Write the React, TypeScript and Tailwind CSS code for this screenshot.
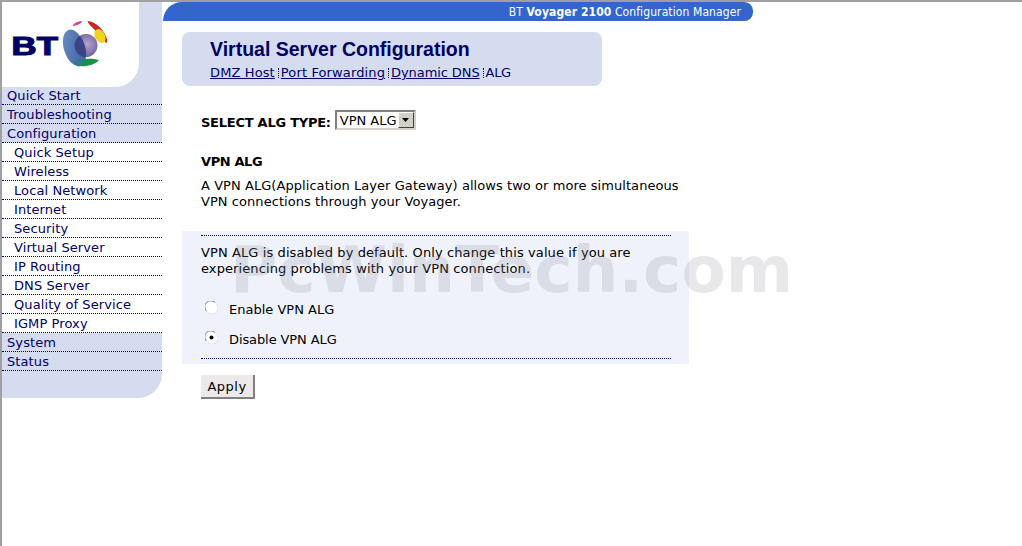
export default function App() {
  const top = ["Quick Start", "Troubleshooting", "Configuration"];
  const sub = ["Quick Setup", "Wireless", "Local Network", "Internet", "Security", "Virtual Server", "IP Routing", "DNS Server", "Quality of Service", "IGMP Proxy"];
  const bottom = ["System", "Status"];
  const rowDots = "border-b border-dotted border-[#000066]";
  return (
    <div className="relative h-[546px] w-[1022px] overflow-hidden bg-white border-t-2 border-l-2 border-[#a0a0a0] font-['DejaVu_Sans',sans-serif] text-[13px] text-black">
      <div className="flex items-start">
        <aside className="w-[160px] shrink-0 rounded-br-[24px] bg-[#d6dcf0] pb-[27px] tracking-[0.1px] text-[#000066]">
          <div className="flex h-[85px] w-[137px] items-start rounded-br-[24px] bg-white">
            <svg width="110" height="60" viewBox="11 19 110 60" className="mt-[17px] ml-[9px]">
              <defs>
                <radialGradient id="pur" cx="0.55" cy="0.45" r="0.6">
                  <stop offset="0" stopColor="#b4a4cc" />
                  <stop offset="1" stopColor="#6c5c9c" />
                </radialGradient>
                <linearGradient id="blu" x1="0" y1="0" x2="1" y2="1">
                  <stop offset="0" stopColor="#6a90c8" />
                  <stop offset="1" stopColor="#3c5a9c" />
                </linearGradient>
                <clipPath id="ov"><circle cx="86" cy="45.500" r="11.500" /></clipPath>
              </defs>
              <text x="11.500" y="55" fontFamily="'Liberation Sans',sans-serif" fontWeight="700" fontSize="25" fill="#000066" stroke="#000066" strokeWidth="1.100" textLength="46.500" lengthAdjust="spacingAndGlyphs">BT</text>
              <path d="M73 25 C75 22.500 79 21 82 21 C82 23 78 25 74 26 C73 26 73 25.500 73 25Z" fill="#e0408c" />
              <path d="M87.500 21 C95 21.500 104 29 107 39 C107.500 41 107 43 106 43 L94 29 C91 26 88 24 87.500 21Z" fill="#c8281e" />
              <ellipse cx="100" cy="36" rx="5" ry="7.500" transform="rotate(-28 100 36)" fill="#f2d21a" />
              <circle cx="86" cy="45.500" r="11.500" fill="url(#pur)" />
              <ellipse cx="74.500" cy="48" rx="10.500" ry="19" transform="rotate(-18 74.500 48)" fill="url(#blu)" />
              <g clipPath="url(#ov)">
                <ellipse cx="74.500" cy="48" rx="10.500" ry="19" transform="rotate(-18 74.500 48)" fill="#3c4488" />
              </g>
              <path d="M74 62 C80 58 92 58 99 60 C95 65 85 67 80 66 C77 65.500 75 64 74 62Z" fill="#189048" />
              <path d="M74 62 C77 60 81 59.500 85 59.500 C84 62 82 65 80 66 C77 65.500 75 64 74 62Z" fill="#2c7c90" />
            </svg>
          </div>
          {top.map((t, i) => (
            <div key={t} className={`${i === 0 ? "h-[18px] leading-[18px]" : "h-[19px] leading-[20px]"} pl-[5px] ${rowDots}`}>{t}</div>
          ))}
          <div className="bg-white">
            {sub.map((t) => (
              <div key={t} className={`h-[19px] pl-[12px] leading-[20px] ${rowDots}`}>{t}</div>
            ))}
          </div>
          {bottom.map((t) => (
            <div key={t} className={`h-[19px] pl-[5px] leading-[20px] ${rowDots}`}>{t}</div>
          ))}
        </aside>
        <main className="min-w-0 flex-1">
          <div className="ml-px flex h-[19px] w-[590px] items-center justify-end rounded-tl-[20px] rounded-r-[9px] bg-[#3366cc] pr-[12px] font-['DejaVu_Sans_Condensed','DejaVu_Sans',sans-serif] text-[12px] tracking-[0.1px] text-white">
            <span>BT <b>Voyager 2100</b> Configuration Manager</span>
          </div>
          <div className="mt-[11px] ml-[20px] h-[54px] w-[420px] rounded-[8px] bg-[#d6dcf0] pt-[6px] pl-[28px] text-[#000066]">
            <h1 className="font-['Liberation_Sans',sans-serif] text-[19.5px] leading-[23px] font-bold">Virtual Server Configuration</h1>
            <div className="mt-[4px] flex leading-[16px]">
              <a className="tracking-[0.12px] underline">DMZ Host</a>
              <span className="my-[3px] mr-[2px] ml-[3px] border-l border-dotted border-[#000066]" />
              <a className="tracking-[0.13px] underline">Port Forwarding</a>
              <span className="my-[3px] mr-[2px] ml-[3px] border-l border-dotted border-[#000066]" />
              <a className="-tracking-[0.09px] underline">Dynamic DNS</a>
              <span className="my-[3px] mr-[2px] ml-[3px] border-l border-dotted border-[#000066]" />
              <span className="-tracking-[0.3px]">ALG</span>
            </div>
          </div>
          <div className="mt-[24px] ml-[39px] flex h-[20px] items-center">
            <b className="mt-[6px] mr-[4px] -tracking-[0.25px]">SELECT ALG TYPE:</b>
            <div className="flex h-[20px] w-[81px] items-center border-2 border-t-[#808080] border-l-[#808080] border-r-[#d4d0c8] border-b-[#d4d0c8] bg-white pl-[3px]">
              <span className="flex-1 pt-px">VPN ALG</span>
              <span className="flex h-[16px] w-[16px] items-center justify-center border-t border-l border-r border-b border-t-white border-l-white border-r-[#404040] border-b-[#404040] bg-[#d4d0c8]">
                <svg width="7" height="4" viewBox="0 0 7 4"><path d="M0 0h7L3.500 4z" fill="#000" /></svg>
              </span>
            </div>
          </div>
          <h2 className="mt-[24px] ml-[39px] leading-[16px] font-bold -tracking-[0.4px]">VPN ALG</h2>
          <p className="mt-[8px] ml-[39px] w-[490px] leading-[16px] tracking-[0.06px]">
            A VPN ALG(Application Layer Gateway) allows two or more simultaneous<br />VPN connections through your Voyager.
          </p>
          <section className="mt-[21px] ml-[20px] h-[133px] w-[507px] bg-[#eff2fa] px-[19px] pt-[4px] tracking-[0.1px]">
            <div className="w-[470px] border-t border-dotted border-[#000066]" />
            <p className="mt-[9px] leading-[16px]">
              VPN ALG is disabled by default. Only change this value if you are<br />experiencing problems with your VPN connection.
            </p>
            <label className="mt-[25px] flex h-[16px] items-center leading-[16px]">
              <Radio />
              <span className="ml-[11px] tracking-normal">Enable VPN ALG</span>
            </label>
            <label className="mt-[14px] flex h-[16px] items-center leading-[16px]">
              <Radio checked />
              <span className="ml-[11px] -tracking-[0.1px]">Disable VPN ALG</span>
            </label>
            <div className="mt-[10px] w-[470px] border-t border-dotted border-[#000066]" />
          </section>
          <button className="mt-[11px] ml-[39px] flex h-[24px] w-[54px] items-center justify-center border-r-2 border-b-2 border-r-[#808080] border-b-[#808080] bg-[#ece9e8] pt-px tracking-[0.5px] text-black">Apply</button>
        </main>
      </div>
      <div className="pointer-events-none absolute top-[230px] left-[228px] font-['DejaVu_Sans',sans-serif] text-[64.6px] leading-[76px] font-bold whitespace-nowrap text-[#8a8e96]/20">PcWinTech.com</div>
    </div>
  );
}

function Radio({ checked = false }: { checked?: boolean }) {
  return (
    <svg width="13" height="13" viewBox="0 0 13 13" className="ml-[4px] -mt-[6px] shrink-0">
      <circle cx="6.500" cy="6.500" r="6" fill="#fff" />
      <path d="M1.500 10A6 6 0 0 1 10 1.500" fill="none" stroke="#808080" strokeWidth="1" />
      <path d="M3 11.500A6 6 0 0 0 11.500 3" fill="none" stroke="#e4e0d8" strokeWidth="1" />
      {checked && <circle cx="6.500" cy="6.500" r="2" fill="#000" />}
    </svg>
  );
}
